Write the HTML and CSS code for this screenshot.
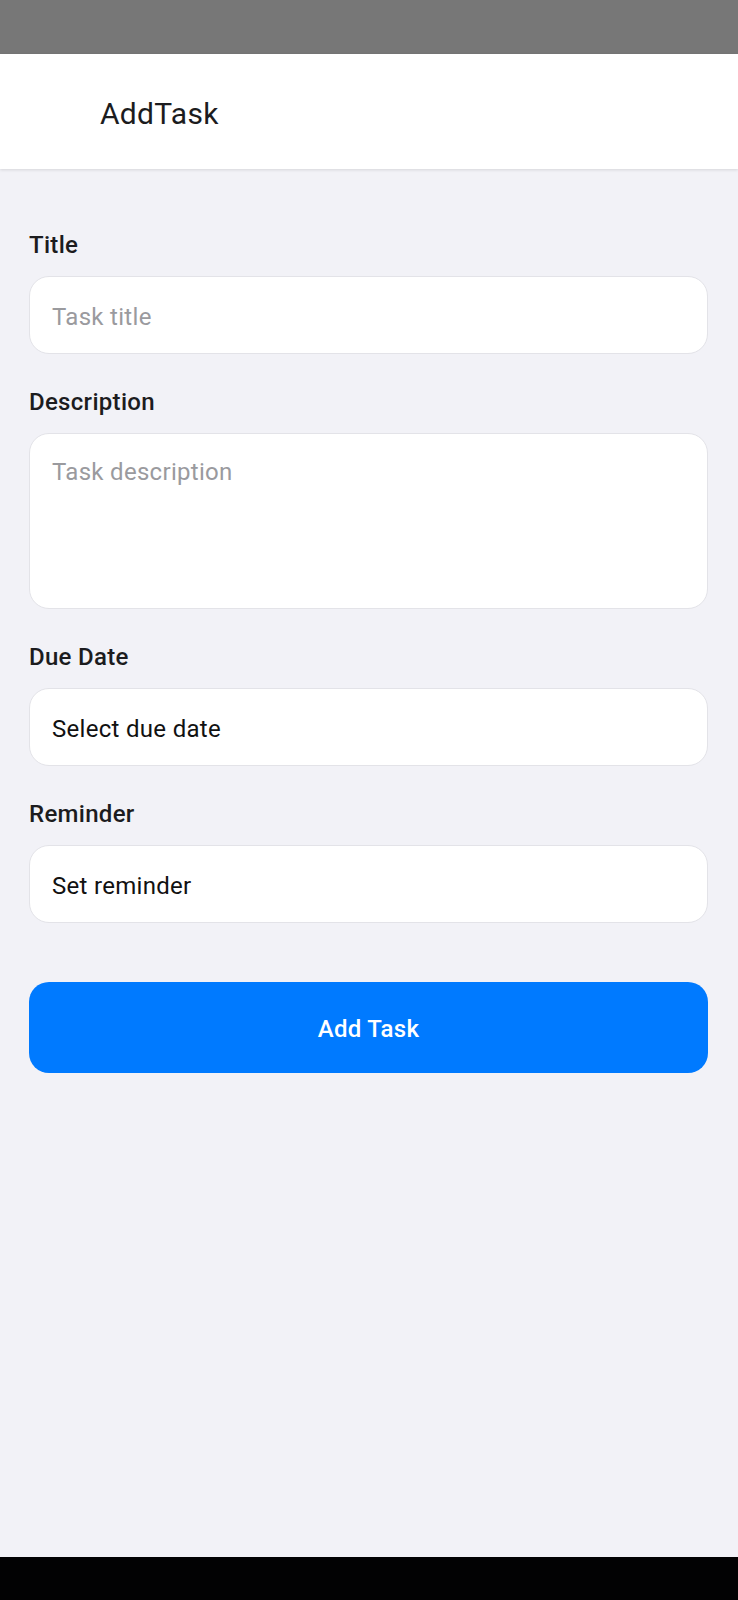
FILE: index.html
```html
<!DOCTYPE html>
<html lang="en">
<head>
<meta charset="utf-8">
<title>AddTask</title>
<link rel="stylesheet" href="styles.css">
</head>
<body>
<div class="screen">
  <div class="status-bar"></div>
  <header class="app-header">
    <h1 class="app-title">AddTask</h1>
  </header>
  <main class="form">
    <div class="field">
      <label class="label">Title</label>
      <div class="input"><span class="placeholder">Task title</span></div>
    </div>
    <div class="field">
      <label class="label">Description</label>
      <div class="input textarea"><span class="placeholder">Task description</span></div>
    </div>
    <div class="field">
      <label class="label">Due Date</label>
      <div class="input"><span class="value">Select due date</span></div>
    </div>
    <div class="field">
      <label class="label">Reminder</label>
      <div class="input"><span class="value">Set reminder</span></div>
    </div>
    <button class="submit">Add Task</button>
  </main>
  <div class="nav-bar"></div>
</div>
</body>
</html>
```
FILE: styles.css
```css
* { box-sizing: border-box; }
html, body { margin: 0; padding: 0; }
body {
  font-family: Roboto, "Noto Sans", "Liberation Sans", sans-serif;
  background: #f2f2f7;
}
.screen {
  width: 738px;
  height: 1600px;
  display: flex;
  flex-direction: column;
  background: #f2f2f7;
}
.status-bar {
  height: 54px;
  flex: none;
  background: #777777;
}
.app-header {
  flex: none;
  height: 115px;
  background: #ffffff;
  padding: 42px 0 0 100px;
  box-shadow: 0 1px 3px rgba(0, 0, 0, 0.12);
  position: relative;
  z-index: 1;
}
.app-title {
  margin: 0;
  font-size: 30px;
  line-height: 36px;
  font-weight: 400;
  letter-spacing: 0.3px;
  color: #1c1c1e;
}
.form {
  flex: 1;
  padding: 64px 30px 0 29px;
  display: flex;
  flex-direction: column;
}
.field {
  display: flex;
  flex-direction: column;
  gap: 19px;
  margin-bottom: 36px;
}
.field:nth-child(4) { margin-bottom: 59px; }
.label {
  font-size: 24px;
  line-height: 24px;
  font-weight: 500;
  letter-spacing: 0.3px;
  color: #1c1c1e;
}
.input {
  height: 78px;
  background: #ffffff;
  border: 1.5px solid #e3e3e8;
  border-radius: 20px;
  padding: 3px 22px 0;
  display: flex;
  align-items: center;
  font-size: 24px;
  letter-spacing: 0.3px;
}
.input.textarea {
  height: 176px;
  align-items: flex-start;
  padding-top: 24px;
}
.placeholder { color: #9a9a9e; }
.value { color: #111111; }
.submit {
  height: 91px;
  border: none;
  border-radius: 20px;
  background: #007aff;
  color: #ffffff;
  font-family: Roboto, "Noto Sans", "Liberation Sans", sans-serif;
  font-size: 24px;
  font-weight: 500;
  letter-spacing: 0.3px;
  padding: 3px 0 0;
  width: 100%;
}
.nav-bar {
  flex: none;
  height: 43px;
  background: #020203;
}
```
